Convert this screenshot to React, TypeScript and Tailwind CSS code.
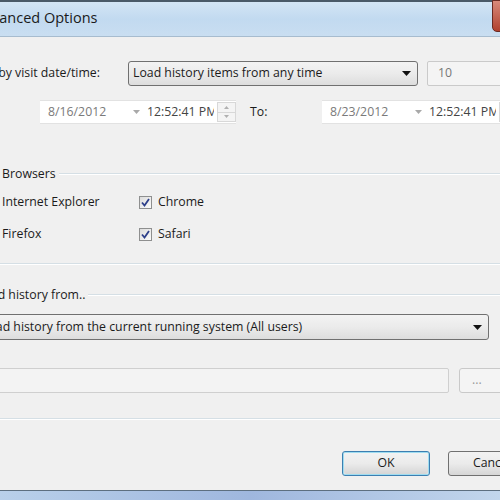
import React from "react";

const Arrow = () => (
  <svg width="9" height="5" viewBox="0 0 9 5"><path d="M0 0h9L4.5 5z" fill="#111" /></svg>
);

const SmallArrow = () => (
  <svg width="7" height="4" viewBox="0 0 7 4"><path d="M0 0h7L3.5 4z" fill="#a9a9a9" /></svg>
);

const Check = () => (
  <div className="shrink-0 w-[13px] h-[13px] border border-[#8e8f8f] bg-gradient-to-br from-[#dcdcdc] to-[#fbfbfb] flex items-center justify-center">
    <svg width="9" height="9" viewBox="0 0 9 9">
      <path d="M1 4.5 L3.5 7.5 L8 1" fill="none" stroke="#2d3f8a" strokeWidth="1.8" />
    </svg>
  </div>
);

const Divider = () => (
  <div className="flex flex-col">
    <div className="h-[1px] bg-[#d5dfe5]" />
    <div className="h-[1px] bg-white" />
  </div>
);

const DateTime = ({ date }: { date: string }) => (
  <div className="shrink-0 flex h-[24px] border-y border-[#e2e2e2] bg-white">
    <div className="shrink-0 w-[106px] flex items-center pl-[8px] pr-[6px] justify-between text-[#7a7a7a]">
      <span>{date}</span>
      <SmallArrow />
    </div>
    <div className="shrink-0 w-[90px] flex items-center pl-[1px] text-[#444] overflow-hidden">
      <span className="shrink-0 whitespace-nowrap w-[67px] overflow-hidden">12:52:41 PM</span>
      <div className="shrink-0 ml-[3px] w-[19px] h-[20px] flex flex-col border border-[#d8d8d8] bg-[#f4f4f4]">
        <div className="flex-1 flex items-center justify-center border-b border-[#d8d8d8]">
          <svg width="5" height="3" viewBox="0 0 5 3"><path d="M0 3h5L2.5 0z" fill="#b0b0b0" /></svg>
        </div>
        <div className="flex-1 flex items-center justify-center">
          <svg width="5" height="3" viewBox="0 0 5 3"><path d="M0 0h5L2.5 3z" fill="#b0b0b0" /></svg>
        </div>
      </div>
    </div>
  </div>
);

export default function App() {
  return (
    <div
      className="w-[500px] h-[500px] overflow-hidden relative bg-[#f0f0f0] text-[12.3px] text-[#1b1b1b]"
      style={{ fontFamily: '"Open Sans", "Noto Sans", sans-serif' }}
    >
      {/* title bar */}
      <div className="h-[37px] border-t-[2px] border-[#4a5a68] bg-gradient-to-b from-[#d3e5f5] via-[#c2daf0] to-[#c9def1] border-b border-b-[#a7bccf] flex items-center relative">
        <span className="shrink-0 ml-[-26px] text-[14.5px] text-[#1a1a1a] whitespace-nowrap mt-[-2px]">Advanced Options</span>
        <div className="absolute right-[-40px] top-[-2px] w-[48px] h-[32px] rounded-b-[5px] border border-[#6b2a22] bg-gradient-to-b from-[#d8897a] to-[#b0402e]" />
      </div>

      {/* row 1 */}
      <div className="flex items-center mt-[24px] h-[25px]">
        <div className="w-[100px] shrink-0 whitespace-nowrap overflow-hidden flex justify-end">
          <span className="shrink-0">Filter by visit date/time:</span>
        </div>
        <div className="shrink-0 ml-[28px] w-[290px] h-[25px] rounded-[3px] border border-[#707070] bg-gradient-to-b from-[#f3f3f3] via-[#ebebeb] to-[#dddddd] flex items-center justify-between pl-[4px] pr-[6px]">
          <span>Load history items from any time</span>
          <Arrow />
        </div>
        <div className="shrink-0 ml-[9px] w-[90px] h-[25px] border border-[#cacaca] rounded-[2px] bg-[#f4f4f4] flex items-center pl-[10px] text-[#777]">
          10
        </div>
      </div>

      {/* row 2 */}
      <div className="flex items-center mt-[14px] h-[24px]">
        <div className="shrink-0 ml-[40px]">
          <DateTime date="8/16/2012" />
        </div>
        <span className="shrink-0 ml-[14px] w-[72px]">To:</span>
        <DateTime date="8/23/2012" />
      </div>

      {/* browsers group */}
      <div className="mt-[42px] flex items-center h-[16px]">
        <span className="shrink-0 ml-[-45px] whitespace-nowrap">Filter to Browsers</span>
        <div className="flex-1 ml-[3px]">
          <Divider />
        </div>
      </div>
      <div className="mt-[12px] flex items-center h-[16px]">
        <span className="shrink-0 ml-[2px] w-[137px]">Internet Explorer</span>
        <Check />
        <span className="ml-[6px]">Chrome</span>
      </div>
      <div className="mt-[16px] flex items-center h-[16px]">
        <span className="shrink-0 ml-[2px] w-[137px]">Firefox</span>
        <Check />
        <span className="ml-[6px]">Safari</span>
      </div>
      <div className="mt-[21px]">
        <Divider />
      </div>

      {/* load history group */}
      <div className="mt-[22px] flex items-center h-[16px]">
        <span className="shrink-0 ml-[-23px] whitespace-nowrap">Load history from..</span>
        <div className="flex-1 ml-[3px]">
          <Divider />
        </div>
      </div>
      <div className="mt-[11px] flex">
        <div className="shrink-0 ml-[-20px] w-[509px] h-[26px] rounded-[3px] border border-[#707070] bg-gradient-to-b from-[#f3f3f3] via-[#ebebeb] to-[#dddddd] flex items-center justify-between pl-[1px] pr-[6px]">
          <span className="whitespace-nowrap">Load history from the current running system (All users)</span>
          <Arrow />
        </div>
      </div>
      <div className="mt-[28px] flex items-center">
        <div className="shrink-0 ml-[-20px] w-[469px] h-[25px] border border-[#cfcfcf] rounded-[2px] bg-[#f3f3f3]" />
        <div className="shrink-0 ml-[10px] w-[50px] h-[25px] border border-[#c9c9c9] rounded-[3px] bg-[#f4f4f4] flex items-center pl-[12px] text-[#999]">
          ...
        </div>
      </div>
      <div className="mt-[25px]">
        <Divider />
      </div>

      {/* buttons */}
      <div className="mt-[31px] flex items-center">
        <div className="shrink-0 ml-[342px] w-[88px] h-[25px] rounded-[3px] border border-[#3c7fb1] p-[1px] shadow-[inset_0_0_0_1px_#9fdcf0]">
          <div className="w-full h-full rounded-[2px] bg-gradient-to-b from-[#f2f2f2] via-[#ebebeb] to-[#d6d6d6] flex items-center justify-center">
            OK
          </div>
        </div>
        <div className="shrink-0 ml-[18px] w-[88px] h-[25px] rounded-[3px] border border-[#707070] bg-gradient-to-b from-[#f2f2f2] via-[#ebebeb] to-[#d6d6d6] flex items-center justify-center">
          Cancel
        </div>
      </div>

      {/* bottom frame */}
      <div className="absolute left-0 right-0 bottom-0 h-[10px] border-t border-[#5d6f80] bg-gradient-to-r from-[#b9d0ea] via-[#9fb7de] to-[#c2d6ec]" />
    </div>
  );
}
